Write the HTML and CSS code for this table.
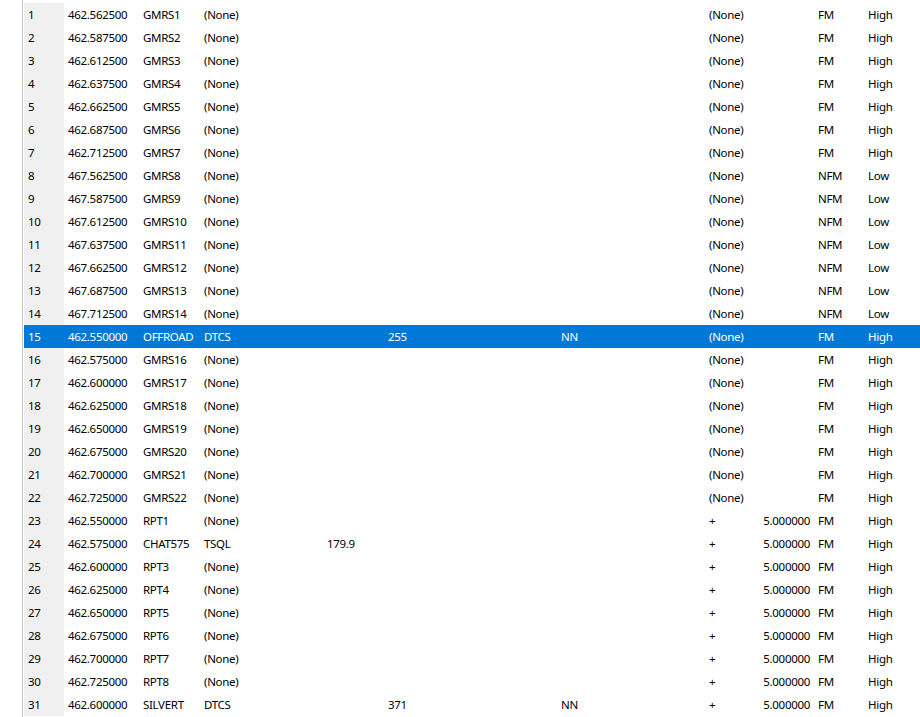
FILE: index.html
```html
<!DOCTYPE html>
<html>
<head>
<meta charset="utf-8">
<link rel="stylesheet" href="styles.css">
</head>
<body>
<div class="sheet">
<div class="grid">
<div class="row"><span class="loc">1</span><span>462.562500</span><span>GMRS1</span><span>(None)</span><span></span><span></span><span></span><span>(None)</span><span class="off"></span><span>FM</span><span>High</span></div>
<div class="row"><span class="loc">2</span><span>462.587500</span><span>GMRS2</span><span>(None)</span><span></span><span></span><span></span><span>(None)</span><span class="off"></span><span>FM</span><span>High</span></div>
<div class="row"><span class="loc">3</span><span>462.612500</span><span>GMRS3</span><span>(None)</span><span></span><span></span><span></span><span>(None)</span><span class="off"></span><span>FM</span><span>High</span></div>
<div class="row"><span class="loc">4</span><span>462.637500</span><span>GMRS4</span><span>(None)</span><span></span><span></span><span></span><span>(None)</span><span class="off"></span><span>FM</span><span>High</span></div>
<div class="row"><span class="loc">5</span><span>462.662500</span><span>GMRS5</span><span>(None)</span><span></span><span></span><span></span><span>(None)</span><span class="off"></span><span>FM</span><span>High</span></div>
<div class="row"><span class="loc">6</span><span>462.687500</span><span>GMRS6</span><span>(None)</span><span></span><span></span><span></span><span>(None)</span><span class="off"></span><span>FM</span><span>High</span></div>
<div class="row"><span class="loc">7</span><span>462.712500</span><span>GMRS7</span><span>(None)</span><span></span><span></span><span></span><span>(None)</span><span class="off"></span><span>FM</span><span>High</span></div>
<div class="row"><span class="loc">8</span><span>467.562500</span><span>GMRS8</span><span>(None)</span><span></span><span></span><span></span><span>(None)</span><span class="off"></span><span>NFM</span><span>Low</span></div>
<div class="row"><span class="loc">9</span><span>467.587500</span><span>GMRS9</span><span>(None)</span><span></span><span></span><span></span><span>(None)</span><span class="off"></span><span>NFM</span><span>Low</span></div>
<div class="row"><span class="loc">10</span><span>467.612500</span><span>GMRS10</span><span>(None)</span><span></span><span></span><span></span><span>(None)</span><span class="off"></span><span>NFM</span><span>Low</span></div>
<div class="row"><span class="loc">11</span><span>467.637500</span><span>GMRS11</span><span>(None)</span><span></span><span></span><span></span><span>(None)</span><span class="off"></span><span>NFM</span><span>Low</span></div>
<div class="row"><span class="loc">12</span><span>467.662500</span><span>GMRS12</span><span>(None)</span><span></span><span></span><span></span><span>(None)</span><span class="off"></span><span>NFM</span><span>Low</span></div>
<div class="row"><span class="loc">13</span><span>467.687500</span><span>GMRS13</span><span>(None)</span><span></span><span></span><span></span><span>(None)</span><span class="off"></span><span>NFM</span><span>Low</span></div>
<div class="row"><span class="loc">14</span><span>467.712500</span><span>GMRS14</span><span>(None)</span><span></span><span></span><span></span><span>(None)</span><span class="off"></span><span>NFM</span><span>Low</span></div>
<div class="row selected"><span class="loc">15</span><span>462.550000</span><span>OFFROAD</span><span>DTCS</span><span></span><span>255</span><span>NN</span><span>(None)</span><span class="off"></span><span>FM</span><span>High</span></div>
<div class="row"><span class="loc">16</span><span>462.575000</span><span>GMRS16</span><span>(None)</span><span></span><span></span><span></span><span>(None)</span><span class="off"></span><span>FM</span><span>High</span></div>
<div class="row"><span class="loc">17</span><span>462.600000</span><span>GMRS17</span><span>(None)</span><span></span><span></span><span></span><span>(None)</span><span class="off"></span><span>FM</span><span>High</span></div>
<div class="row"><span class="loc">18</span><span>462.625000</span><span>GMRS18</span><span>(None)</span><span></span><span></span><span></span><span>(None)</span><span class="off"></span><span>FM</span><span>High</span></div>
<div class="row"><span class="loc">19</span><span>462.650000</span><span>GMRS19</span><span>(None)</span><span></span><span></span><span></span><span>(None)</span><span class="off"></span><span>FM</span><span>High</span></div>
<div class="row"><span class="loc">20</span><span>462.675000</span><span>GMRS20</span><span>(None)</span><span></span><span></span><span></span><span>(None)</span><span class="off"></span><span>FM</span><span>High</span></div>
<div class="row"><span class="loc">21</span><span>462.700000</span><span>GMRS21</span><span>(None)</span><span></span><span></span><span></span><span>(None)</span><span class="off"></span><span>FM</span><span>High</span></div>
<div class="row"><span class="loc">22</span><span>462.725000</span><span>GMRS22</span><span>(None)</span><span></span><span></span><span></span><span>(None)</span><span class="off"></span><span>FM</span><span>High</span></div>
<div class="row"><span class="loc">23</span><span>462.550000</span><span>RPT1</span><span>(None)</span><span></span><span></span><span></span><span>+</span><span class="off">5.000000</span><span>FM</span><span>High</span></div>
<div class="row"><span class="loc">24</span><span>462.575000</span><span>CHAT575</span><span>TSQL</span><span>179.9</span><span></span><span></span><span>+</span><span class="off">5.000000</span><span>FM</span><span>High</span></div>
<div class="row"><span class="loc">25</span><span>462.600000</span><span>RPT3</span><span>(None)</span><span></span><span></span><span></span><span>+</span><span class="off">5.000000</span><span>FM</span><span>High</span></div>
<div class="row"><span class="loc">26</span><span>462.625000</span><span>RPT4</span><span>(None)</span><span></span><span></span><span></span><span>+</span><span class="off">5.000000</span><span>FM</span><span>High</span></div>
<div class="row"><span class="loc">27</span><span>462.650000</span><span>RPT5</span><span>(None)</span><span></span><span></span><span></span><span>+</span><span class="off">5.000000</span><span>FM</span><span>High</span></div>
<div class="row"><span class="loc">28</span><span>462.675000</span><span>RPT6</span><span>(None)</span><span></span><span></span><span></span><span>+</span><span class="off">5.000000</span><span>FM</span><span>High</span></div>
<div class="row"><span class="loc">29</span><span>462.700000</span><span>RPT7</span><span>(None)</span><span></span><span></span><span></span><span>+</span><span class="off">5.000000</span><span>FM</span><span>High</span></div>
<div class="row"><span class="loc">30</span><span>462.725000</span><span>RPT8</span><span>(None)</span><span></span><span></span><span></span><span>+</span><span class="off">5.000000</span><span>FM</span><span>High</span></div>
<div class="row"><span class="loc">31</span><span>462.600000</span><span>SILVERT</span><span>DTCS</span><span></span><span>371</span><span>NN</span><span>+</span><span class="off">5.000000</span><span>FM</span><span>High</span></div>
</div>
</div>
</body>
</html>
```

FILE: styles.css
```css
html, body {
  margin: 0;
  padding: 0;
  background: #ffffff;
  overflow: hidden;
}
.sheet {
  padding-left: 22px;
  height: 717px;
  font-family: "Noto Sans", "Open Sans", sans-serif;
  font-size: 11.5px;
  letter-spacing: -0.3px;
  color: #000000;
}
.grid {
  border-left: 1px solid #c4c4c4;
  padding-top: 3px;
  padding-left: 1px;
  height: 714px;
}
.row {
  display: grid;
  grid-template-columns: 40px 75px 61px 123px 61px 173px 148px 45px 64px 50px 56px;
  height: 23px;
  line-height: 23px;
}
.row span {
  padding-left: 4px;
  white-space: nowrap;
  overflow: hidden;
}
.row .loc {
  background: #f0f0f0;
}
.row .off {
  text-align: right;
  padding-left: 0;
  padding-right: 4px;
}
.row.selected {
  background: #0078d7;
  color: #ffffff;
}
.row.selected .loc {
  background: #0078d7;
}
```
